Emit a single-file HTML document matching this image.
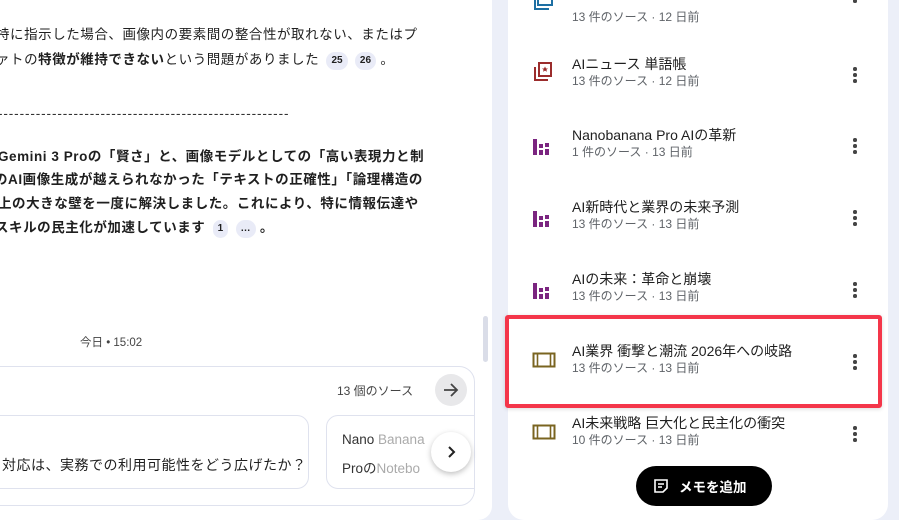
<!DOCTYPE html>
<html><head><meta charset="utf-8"><style>
*{margin:0;padding:0;box-sizing:border-box}
body{width:899px;height:520px;overflow:hidden;background:#eceff8;font-family:"Liberation Sans","Noto Sans CJK JP",sans-serif;color:#1f1f1f;position:relative}
.left{position:absolute;left:0;top:0;width:492px;height:520px;background:#fff;border-bottom-right-radius:14px;overflow:hidden}
.right{position:absolute;left:508px;top:0;width:380px;height:520px;background:#fff;border-bottom-left-radius:16px;border-bottom-right-radius:16px}
.p{position:absolute;font-size:13.5px;white-space:nowrap;letter-spacing:0.55px}
.b{font-weight:bold}
.cite{display:inline-block;background:#e9ebf7;border-radius:9px;font-size:10px;font-weight:bold;padding:2px 5px;line-height:14px;vertical-align:1px;margin-left:3px;letter-spacing:0}
.item{position:absolute;left:0;width:380px;height:40px}
.t{position:absolute;left:64px;top:-3px;font-size:14px;color:#1f1f1f;white-space:nowrap}
.s{position:absolute;left:64px;top:15px;font-size:12px;color:#5f6368;white-space:nowrap}
.dots{position:absolute;left:345px;top:10px;width:4px}
.dots i{display:block;width:3.5px;height:3.5px;border-radius:50%;background:#444;margin-bottom:2.5px}
.ic{position:absolute;left:24px;top:4px}
</style></head><body>
<div class="left">
<div class="p" style="left:-4px;top:23px">特に指示した場合、画像内の要素間の整合性が取れない、またはプ</div>
<div class="p" style="left:-4px;top:48px">ァトの<span class="b">特徴が維持できない</span>という問題がありました <span class="cite">25</span> <span class="cite">26</span> 。</div>
<div class="p" style="left:-2px;top:106px;color:#333;letter-spacing:0.9px">------------------------------------------------------</div>
<div class="p b" style="left:-2px;top:145px">Gemini 3 Proの「賢さ」と、画像モデルとしての「高い表現力と制</div>
<div class="p b" style="left:-6px;top:168px">のAI画像生成が越えられなかった「テキストの正確性」「論理構造の</div>
<div class="p b" style="left:-2px;top:192px">上の大きな壁を一度に解決しました。これにより、特に情報伝達や</div>
<div class="p b" style="left:-5px;top:216px">スキルの民主化が加速しています <span class="cite">1</span> <span class="cite">…</span> 。</div>
<div style="position:absolute;left:483px;top:316px;width:5px;height:46px;border-radius:3px;background:#dadde8"></div>
<div class="p" style="left:80px;top:334px;font-size:11.5px;color:#444;letter-spacing:0">今日 • 15:02</div>
<div style="position:absolute;left:-20px;top:366px;width:495px;height:140px;border:1px solid #dfe2ee;border-radius:16px;overflow:hidden">
<div style="position:absolute;left:345px;top:48px;width:160px;height:74px;border:1px solid #dfe2ee;border-radius:12px"></div>
</div>
<div class="p" style="left:337px;top:382px;font-size:12px;color:#444;letter-spacing:0">13 個のソース</div>
<div style="position:absolute;left:435px;top:374px;width:32px;height:32px;border-radius:50%;background:#e8e8ea"></div>
<svg style="position:absolute;left:441px;top:380px" width="20" height="20" viewBox="0 0 20 20"><path d="M3 10h13M10 4l6 6-6 6" stroke="#444" stroke-width="1.8" fill="none"/></svg>
<div style="position:absolute;left:-20px;top:415px;width:329px;height:74px;border:1px solid #dfe2ee;border-radius:12px"></div>
<div class="p" style="left:2px;top:455px;font-size:14px;letter-spacing:0.5px">対応は、実務での利用可能性をどう広げたか？</div>
<div class="p" style="left:342px;top:432px;font-size:13.5px;color:#333;letter-spacing:0">Nano <span style="color:#aaa">Banana</span></div>
<div class="p" style="left:342px;top:457px;font-size:13.5px;color:#333;letter-spacing:0">Proの<span style="color:#aaa">Notebo</span></div>
<div style="position:absolute;left:431px;top:432px;width:40px;height:40px;border-radius:50%;background:#fff;box-shadow:0 2px 6px rgba(0,0,0,.25)"></div>
<svg style="position:absolute;left:443px;top:444px" width="16" height="16" viewBox="0 0 16 16"><path d="M6 3l5 5-5 5" stroke="#222" stroke-width="2" fill="none"/></svg>
</div>
<div class="right">
<div class="item" style="top:-7px">
<svg class="ic" style="top:0" width="22" height="22" viewBox="0 0 22 22"><path d="M3 2v14h14" stroke="#1d6fa3" stroke-width="2" fill="none"/><rect x="6" y="-6" width="14" height="18" stroke="#1d6fa3" stroke-width="2" fill="none"/></svg>
<div class="s">13 件のソース · 12 日前</div><div class="dots" style="top:0"><i></i><i></i></div></div>
<div class="item" style="top:57px"><svg class="ic" width="22" height="22" viewBox="0 0 22 22"><path d="M3 6v13h13" stroke="#9b2c2c" stroke-width="2" fill="none"/><rect x="7" y="2" width="12" height="13" stroke="#9b2c2c" stroke-width="2" fill="none"/><path d="M13 5.5l1 2h2l-1.6 1.3.6 2-2-1.2-2 1.2.6-2L10 7.5h2z" fill="#9b2c2c"/></svg>
<div class="t">AIニュース 単語帳</div><div class="s">13 件のソース · 12 日前</div><div class="dots"><i></i><i></i><i></i></div></div>
<div class="item" style="top:128px"><svg class="ic" style="top:11px" width="20" height="16" viewBox="0 0 20 16"><g fill="#7b2580"><rect x="1" y="0" width="4" height="16"/><rect x="7" y="5" width="4" height="4"/><rect x="7" y="11" width="4" height="5"/><rect x="13" y="4" width="4" height="4"/><rect x="13" y="10" width="4" height="6"/></g></svg>
<div class="t">Nanobanana Pro AIの革新</div><div class="s">1 件のソース · 13 日前</div><div class="dots"><i></i><i></i><i></i></div></div>
<div class="item" style="top:200px"><svg class="ic" style="top:11px" width="20" height="16" viewBox="0 0 20 16"><g fill="#7b2580"><rect x="1" y="0" width="4" height="16"/><rect x="7" y="5" width="4" height="4"/><rect x="7" y="11" width="4" height="5"/><rect x="13" y="4" width="4" height="4"/><rect x="13" y="10" width="4" height="6"/></g></svg>
<div class="t">AI新時代と業界の未来予測</div><div class="s">13 件のソース · 13 日前</div><div class="dots"><i></i><i></i><i></i></div></div>
<div class="item" style="top:272px"><svg class="ic" style="top:11px" width="20" height="16" viewBox="0 0 20 16"><g fill="#7b2580"><rect x="1" y="0" width="4" height="16"/><rect x="7" y="5" width="4" height="4"/><rect x="7" y="11" width="4" height="5"/><rect x="13" y="4" width="4" height="4"/><rect x="13" y="10" width="4" height="6"/></g></svg>
<div class="t">AIの未来：革命と崩壊</div><div class="s">13 件のソース · 13 日前</div><div class="dots"><i></i><i></i><i></i></div></div>
<div class="item" style="top:344px"><svg class="ic" style="top:8px" width="24" height="16" viewBox="0 0 24 16"><rect x="1.5" y="1.5" width="21" height="13" stroke="#7a6420" stroke-width="2" fill="none"/><path d="M5.5 2v12M18.5 2v12" stroke="#7a6420" stroke-width="1.6"/></svg>
<div class="t">AI業界 衝撃と潮流 2026年への岐路</div><div class="s">13 件のソース · 13 日前</div><div class="dots"><i></i><i></i><i></i></div></div>
<div class="item" style="top:416px"><svg class="ic" style="top:8px" width="24" height="16" viewBox="0 0 24 16"><rect x="1.5" y="1.5" width="21" height="13" stroke="#7a6420" stroke-width="2" fill="none"/><path d="M5.5 2v12M18.5 2v12" stroke="#7a6420" stroke-width="1.6"/></svg>
<div class="t">AI未来戦略 巨大化と民主化の衝突</div><div class="s">10 件のソース · 13 日前</div><div class="dots"><i></i><i></i><i></i></div></div>
<div style="position:absolute;left:128px;top:466px;width:136px;height:40px;border-radius:20px;background:#000;color:#fff;font-size:13.5px;font-weight:bold">
<svg style="position:absolute;left:17px;top:12px" width="16" height="16" viewBox="0 0 16 16"><path d="M2 2h12v8l-4 4H2z" stroke="#fff" stroke-width="1.6" fill="none"/><path d="M5 6h6M5 9h4" stroke="#fff" stroke-width="1.5"/></svg>
<span style="position:absolute;left:43px;top:10px">メモを追加</span></div>
</div>
<div style="position:absolute;left:505px;top:315px;width:377px;height:93px;border:4px solid #f4364a;border-radius:3px;box-shadow:0 1px 4px rgba(0,0,0,.15)"></div>
</body></html>
